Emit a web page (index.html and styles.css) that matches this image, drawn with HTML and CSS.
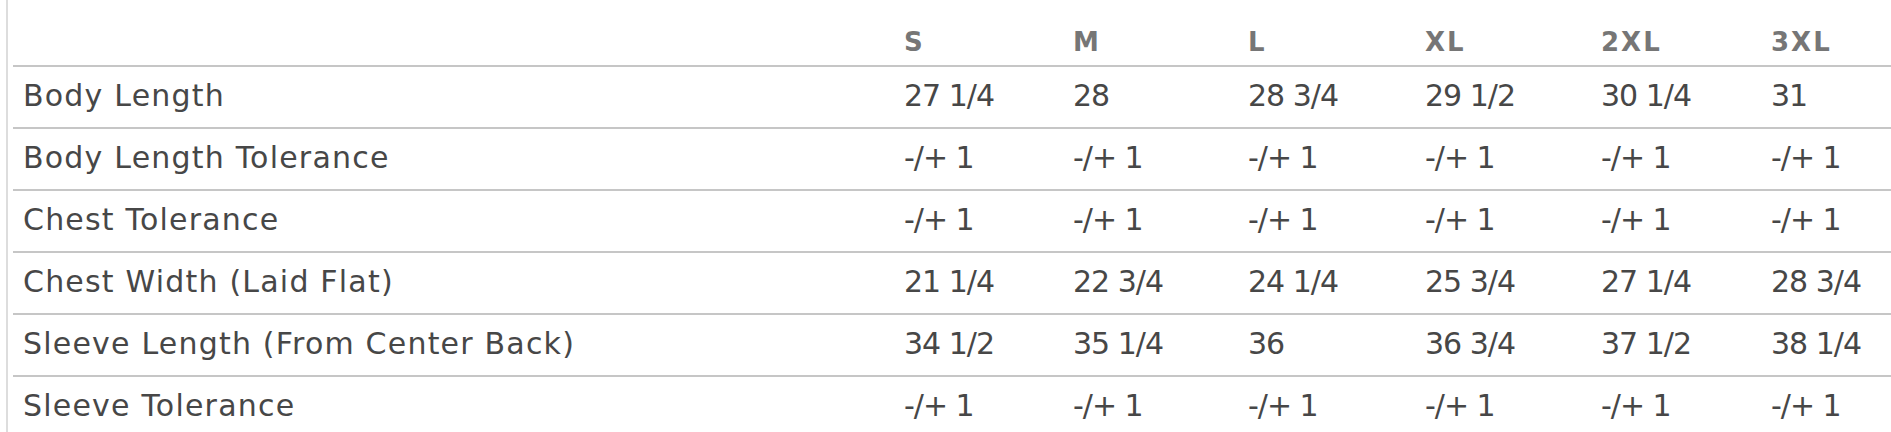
FILE: index.html
```html
<!DOCTYPE html>
<html lang="en">
<head>
<meta charset="utf-8">
<title>Size Chart</title>
<link rel="stylesheet" href="styles.css">
</head>
<body>
<div class="sheet">
  <table class="size-table">
    <colgroup>
      <col class="c-label">
      <col class="c-s">
      <col class="c-m">
      <col class="c-l">
      <col class="c-xl">
      <col class="c-2xl">
      <col class="c-3xl">
    </colgroup>
    <thead>
      <tr>
        <th></th>
        <th>S</th>
        <th>M</th>
        <th>L</th>
        <th>XL</th>
        <th>2XL</th>
        <th>3XL</th>
      </tr>
    </thead>
    <tbody>
      <tr>
        <td class="label">Body Length</td>
        <td>27 1/4</td><td>28</td><td>28 3/4</td><td>29 1/2</td><td>30 1/4</td><td>31</td>
      </tr>
      <tr>
        <td class="label">Body Length Tolerance</td>
        <td>-/+ 1</td><td>-/+ 1</td><td>-/+ 1</td><td>-/+ 1</td><td>-/+ 1</td><td>-/+ 1</td>
      </tr>
      <tr>
        <td class="label">Chest Tolerance</td>
        <td>-/+ 1</td><td>-/+ 1</td><td>-/+ 1</td><td>-/+ 1</td><td>-/+ 1</td><td>-/+ 1</td>
      </tr>
      <tr>
        <td class="label">Chest Width (Laid Flat)</td>
        <td>21 1/4</td><td>22 3/4</td><td>24 1/4</td><td>25 3/4</td><td>27 1/4</td><td>28 3/4</td>
      </tr>
      <tr>
        <td class="label">Sleeve Length (From Center Back)</td>
        <td>34 1/2</td><td>35 1/4</td><td>36</td><td>36 3/4</td><td>37 1/2</td><td>38 1/4</td>
      </tr>
      <tr>
        <td class="label">Sleeve Tolerance</td>
        <td>-/+ 1</td><td>-/+ 1</td><td>-/+ 1</td><td>-/+ 1</td><td>-/+ 1</td><td>-/+ 1</td>
      </tr>
    </tbody>
  </table>
</div>
</body>
</html>
```
FILE: styles.css
```css
html, body {
  margin: 0;
  padding: 0;
  background: #ffffff;
}

body {
  width: 1891px;
  height: 432px;
  overflow: hidden;
  font-family: "DejaVu Sans", "Open Sans", sans-serif;
}

.sheet {
  margin-left: 6px;
  border-left: 2px solid #dddddd;
  padding-left: 5px;
  min-height: 432px;
}

.size-table {
  width: 1878px;
  table-layout: fixed;
  border-collapse: collapse;
  border-spacing: 0;
}

.c-label { width: 881px; }
.c-s { width: 169px; }
.c-m { width: 175px; }
.c-l { width: 177px; }
.c-xl { width: 176px; }
.c-2xl { width: 170px; }
.c-3xl { width: 130px; }

.size-table th {
  height: 66px;
  padding: 0 10px 8px 10px;
  box-sizing: border-box;
  vertical-align: bottom;
  text-align: left;
  font-size: 26px;
  line-height: 30px;
  font-weight: 700;
  letter-spacing: 2px;
  color: #767676;
  border-bottom: 2px solid #c6c6c6;
  white-space: nowrap;
}

.size-table td {
  height: 62px;
  padding: 0 10px 3px 10px;
  box-sizing: border-box;
  vertical-align: middle;
  text-align: left;
  font-size: 30px;
  line-height: 34px;
  letter-spacing: -1px;
  color: #474747;
  border-bottom: 2px solid #c6c6c6;
  white-space: nowrap;
}

.size-table td.label {
  letter-spacing: 1.2px;
}
```
